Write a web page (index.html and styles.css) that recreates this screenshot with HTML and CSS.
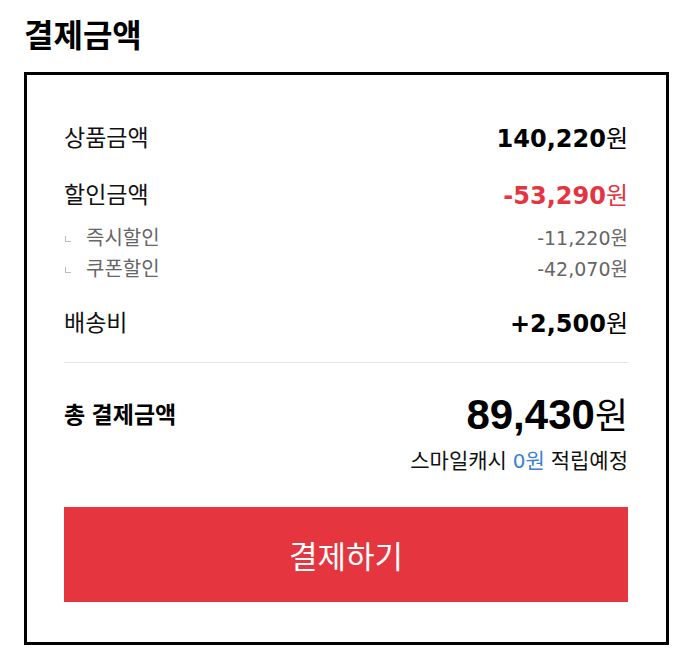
FILE: index.html
```html
<!DOCTYPE html>
<html lang="ko">
<head>
<meta charset="utf-8">
<title>결제금액</title>
<link rel="stylesheet" href="styles.css">
</head>
<body>
<section class="pay">
  <h2 class="pay-title">결제금액</h2>
  <div class="pay-box">
    <div class="row">
      <span class="label">상품금액</span>
      <span class="amount"><b class="num">140,220</b>원</span>
    </div>
    <div class="row row-discount">
      <span class="label">할인금액</span>
      <span class="amount red"><b class="num">-53,290</b>원</span>
    </div>
    <div class="subrows">
      <div class="sub">
        <span class="sub-label"><i class="corner"></i>즉시할인</span>
        <span class="sub-amount"><span class="snum">-11,220</span>원</span>
      </div>
      <div class="sub">
        <span class="sub-label"><i class="corner"></i>쿠폰할인</span>
        <span class="sub-amount"><span class="snum">-42,070</span>원</span>
      </div>
    </div>
    <div class="row row-ship">
      <span class="label">배송비</span>
      <span class="amount"><b class="num">+2,500</b>원</span>
    </div>
    <hr class="divider">
    <div class="row total">
      <span class="label total-label">총 결제금액</span>
      <span class="total-amount"><b class="big">89,430</b>원</span>
    </div>
    <p class="cash">스마일캐시 <span class="blue"><span class="cnum">0</span>원</span> 적립예정</p>
    <button class="pay-btn" type="button">결제하기</button>
  </div>
</section>
</body>
</html>
```

FILE: styles.css
```css
* { box-sizing: border-box; }
html, body { margin: 0; padding: 0; background: #fff; }
body {
  font-family: "Noto Sans CJK KR", "Noto Sans", sans-serif;
  color: #111;
}
.pay { padding-left: 24px; padding-top: 13px; }
.pay-title {
  margin: 0 0 19px;
  font-size: 32px;
  line-height: 40px;
  font-weight: 700;
  color: #000;
}
.pay-box {
  width: 645px;
  border: 3px solid #000;
  padding: 36px 38px 40px 37px;
}
.row {
  display: flex;
  justify-content: space-between;
  align-items: center;
  height: 50px;
}
.label { font-size: 23px; color: #111; }
.amount { font-size: 24px; color: #000; }
.num {
  font-family: "DejaVu Sans", sans-serif;
  font-weight: 700;
  font-size: 24px;
}
.red { color: #e5343f; }
.row-discount { margin-top: 7px; }
.subrows { margin-top: 3px; }
.sub {
  display: flex;
  justify-content: space-between;
  align-items: center;
  height: 31px;
  font-size: 20px;
  color: #666;
}
.sub-amount { font-size: 19px; }
.sub-label { display: flex; align-items: center; }
.corner {
  display: inline-block;
  width: 6px;
  height: 6px;
  border-left: 1px solid #bbb;
  border-bottom: 1px solid #bbb;
  margin: 4px 15px 0 1px;
}
.snum { font-family: "DejaVu Sans", sans-serif; font-size: 19px; }
.row-ship { margin-top: 13px; }
.divider {
  border: 0;
  border-top: 1px solid #e5e5e5;
  margin: 16px 0 0;
}
.total { margin-top: 25px; }
.total-label { font-weight: 700; font-size: 23px; color: #000; }
.total-amount { font-size: 36px; color: #000; }
.big {
  font-family: "Liberation Sans", sans-serif;
  font-weight: 700;
  font-size: 42px;
}
.cash {
  margin: 9px 0 0;
  text-align: right;
  font-size: 21px;
  line-height: 24px;
  color: #111;
}
.cnum { font-family: "DejaVu Sans", sans-serif; font-size: 20px; }
.blue { color: #3b7fd6; }
.pay-btn {
  display: block;
  width: 100%;
  height: 95px;
  margin-top: 34px;
  border: 0;
  background: #e53640;
  color: #fff;
  font-family: "Noto Sans CJK KR", sans-serif;
  font-size: 31px;
  cursor: pointer;
}
```
